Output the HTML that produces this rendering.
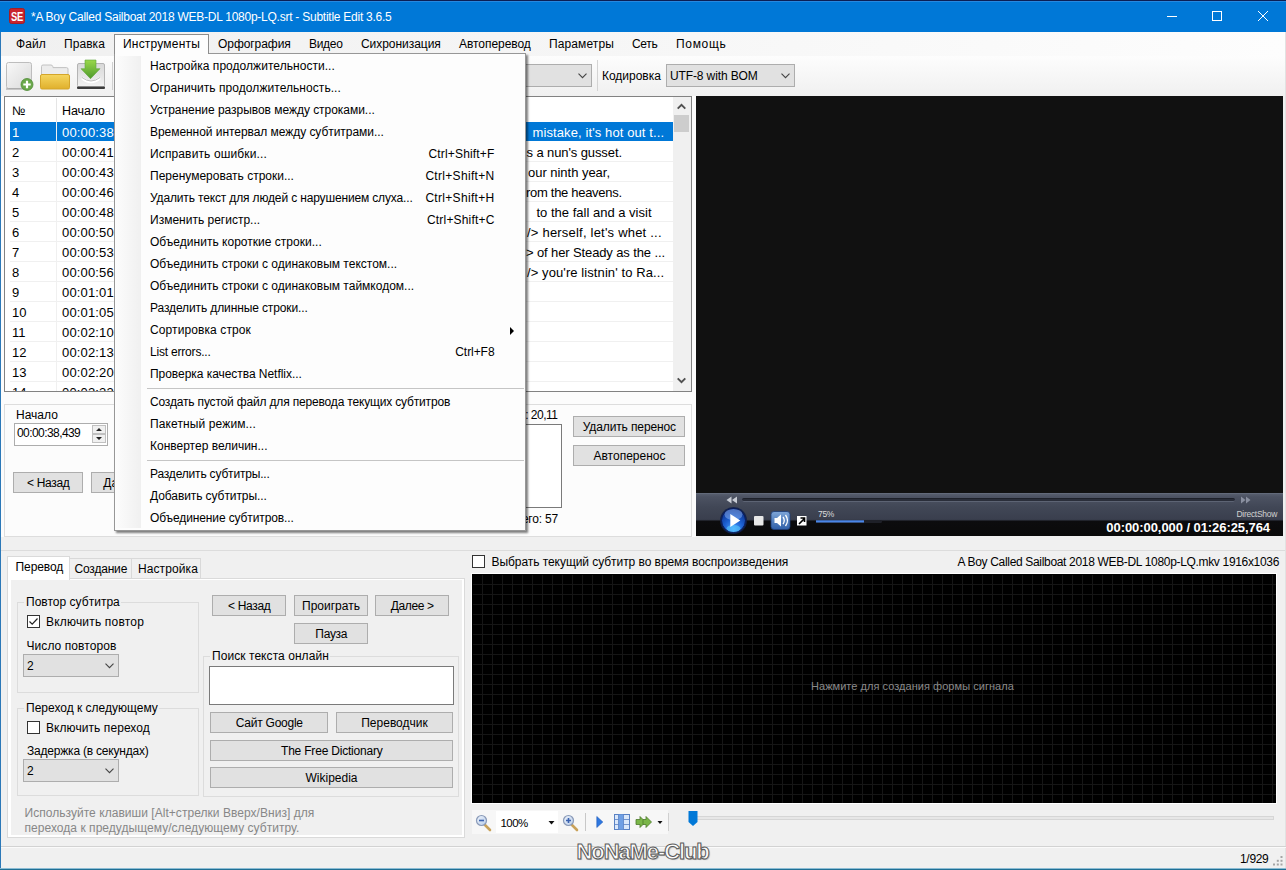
<!DOCTYPE html>
<html><head><meta charset="utf-8"><title>Subtitle Edit</title>
<style>
html,body{margin:0;padding:0;}
body{width:1286px;height:870px;overflow:hidden;position:relative;background:#f0f0f0;font-family:"Liberation Sans","DejaVu Sans",sans-serif;font-size:12px;color:#000;}
.a{position:absolute;white-space:nowrap;}
.t{position:absolute;white-space:nowrap;line-height:16px;height:16px;}
.row{position:absolute;left:5px;height:20px;width:663px;border-bottom:1px solid #f0f0f0;box-sizing:border-box;font-size:13px;line-height:21px;}
.row span{position:absolute;top:0;}
</style></head><body>
<div class="a" style="left:0px;top:0px;width:1286px;height:870px;background:#f0f0f0;"></div>
<div class="a" style="left:0px;top:0px;width:1286px;height:32px;background:#0078d7;"></div>
<div class="a" style="left:0px;top:0px;width:1286px;height:1px;background:#0b1f55;"></div>
<div class="a" style="left:0px;top:1px;width:1286px;height:1px;background:#2688e0;"></div>
<div class="a" style="left:0px;top:32px;width:1px;height:838px;background:#2b78b8;"></div>
<div class="a" style="left:1285px;top:32px;width:1px;height:838px;background:#e2e2e2;"></div>
<div class="a" style="left:0px;top:868px;width:1286px;height:1px;background:#8cbcd4;"></div>
<div class="a" style="left:0px;top:869px;width:1286px;height:1px;background:#1f6f94;"></div>
<div class="a" style="left:9px;top:8px;width:16px;height:16px;background:#c9242d;border:1px solid #a51d25;box-sizing:border-box;border-radius:2.500px;"></div>
<div class="t" style="left:7px;top:8.500px;width:20px;color:#fff;font-weight:bold;font-size:13px;letter-spacing:-0.5px;text-align:center;transform:scaleX(0.72);">SE</div>
<div class="t" style="top:9px;left:31px;color:#fff;letter-spacing:-0.250px;">*A Boy Called Sailboat 2018 WEB-DL 1080p-LQ.srt - Subtitle Edit 3.6.5</div>
<svg class="a" style="left:1150px;top:0" width="136" height="32" viewBox="0 0 136 32"><g stroke="#fff" stroke-width="1" fill="none"><path d="M17 16.5h10"/><rect x="62.5" y="11.5" width="9" height="9"/><path d="M108 11l10 10M118 11l-10 10"/></g></svg>
<div class="a" style="left:1px;top:32px;width:1284px;height:24px;background:linear-gradient(90deg,#f0f0f0,#fdfdfd);"></div>
<div class="a" style="left:1px;top:56px;width:1284px;height:40px;background:linear-gradient(#fdfdfd,#f0f0f0);"></div>
<div class="t" style="top:36px;left:16px;letter-spacing:0.099px;">Файл</div>
<div class="t" style="top:36px;left:64px;letter-spacing:0.053px;">Правка</div>
<div class="t" style="top:36px;left:218px;letter-spacing:-0.062px;">Орфография</div>
<div class="t" style="top:36px;left:309px;letter-spacing:-0.314px;">Видео</div>
<div class="t" style="top:36px;left:361px;letter-spacing:-0.045px;">Сихронизация</div>
<div class="t" style="top:36px;left:459px;letter-spacing:-0.052px;">Автоперевод</div>
<div class="t" style="top:36px;left:549px;letter-spacing:0.104px;">Параметры</div>
<div class="t" style="top:36px;left:632px;letter-spacing:-0.297px;">Сеть</div>
<div class="t" style="top:36px;left:676px;letter-spacing:0.690px;">Помощь</div>
<svg class="a" style="left:4px;top:58px" width="112" height="36" viewBox="0 0 112 36">
<defs>
<linearGradient id="gdoc" x1="0" y1="0" x2="1" y2="1"><stop offset="0" stop-color="#f8f8f8"/><stop offset="1" stop-color="#dadada"/></linearGradient>
<linearGradient id="gfol" x1="0" y1="0" x2="0" y2="1"><stop offset="0" stop-color="#f5d660"/><stop offset="1" stop-color="#e0b02c"/></linearGradient>
<linearGradient id="garr" x1="0" y1="0" x2="0" y2="1"><stop offset="0" stop-color="#9ad84a"/><stop offset="1" stop-color="#4e9a2c"/></linearGradient>
<linearGradient id="gtray" x1="0" y1="0" x2="0" y2="1"><stop offset="0" stop-color="#d8d8d8"/><stop offset="1" stop-color="#f2f2f2"/></linearGradient>
</defs>
<!-- new doc -->
<rect x="2.5" y="4.5" width="25" height="26" rx="2" fill="url(#gdoc)" stroke="#bdbdbd"/>
<path d="M2 31h22" stroke="#9a9a9a" stroke-width="1"/>
<circle cx="23" cy="26.5" r="6" fill="#6aa84a" stroke="#4e8a36" stroke-width="0.8"/>
<path d="M23 22.8v7.4M19.3 26.5h7.4" stroke="#fff" stroke-width="2.2"/>
<!-- folder -->
<path d="M37.5 13v-4.5q0-1.5 1.5-1.5h8q1.5 0 1.8 1.6l.2 1h13.5q1.5 0 1.5 1.5v6h-26.5z" fill="#ececec" stroke="#c2c2c2"/>
<rect x="36.5" y="16.5" width="29" height="14.5" rx="1.5" fill="url(#gfol)" stroke="#d4a52a"/>
<!-- save/download tray -->
<rect x="73.500" y="5.500" width="27" height="23.500" rx="1.500" fill="url(#gtray)" stroke="#b4b4b4"/>
<rect x="73" y="28.500" width="28" height="2.500" rx="1" fill="#3a3a3a"/>
<path d="M78 20q9 8 18 0" stroke="#fff" stroke-width="2.600" fill="none"/>
<path d="M78 19.500q9 7 18 0" stroke="#b0b0b0" stroke-width="0.800" fill="none"/>
<path d="M81 2h11v8.700h4l-9.500 10l-9.500-10h4z" fill="url(#garr)" stroke="#5ea43a" stroke-width="0.600"/>
<!-- separator -->
<path d="M108.500 4v28" stroke="#d0d0d0"/>
</svg>

<div class="a" style="left:479px;top:64px;width:113px;height:23px;background:#e1e1e1;border:1px solid #adadad;box-sizing:border-box;"><svg class="a" style="right:4px;top:8px" width="9" height="6" viewBox="0 0 9 6"><path d="M0.5 0.7L4.5 4.7L8.5 0.7" stroke="#444" stroke-width="1.1" fill="none"/></svg></div>
<div class="a" style="left:597px;top:60px;width:1px;height:31px;background:#d4d4d4;"></div>
<div class="t" style="top:68px;left:602px;letter-spacing:-0.027px;">Кодировка</div>
<div class="a" style="left:666px;top:64px;width:129px;height:23px;background:#e1e1e1;border:1px solid #adadad;box-sizing:border-box;"><svg class="a" style="right:4px;top:8px" width="9" height="6" viewBox="0 0 9 6"><path d="M0.5 0.7L4.5 4.7L8.5 0.7" stroke="#444" stroke-width="1.1" fill="none"/></svg></div>
<div class="t" style="top:67.5px;left:670px;letter-spacing:-0.118px;">UTF-8 with BOM</div>
<div class="a" style="left:1px;top:96px;width:695px;height:441px;background:#fcfcfc;"></div>
<div class="a" style="left:4px;top:96px;width:688px;height:296px;background:#fff;border:1px solid #828282;box-sizing:border-box;overflow:hidden;">
<div class="t" style="left:7px;top:6px;font-size:12.500px;">№</div><div class="t" style="left:57px;top:6px;font-size:12.500px;letter-spacing:-0.1px;">Начало</div>
<div class="a" style="left:51px;top:1px;width:1px;height:24px;background:#e5e5e5"></div>
<div class="row" style="top:25px;background:#0078d7;color:#fff;border-bottom:1px solid #fff;"><span style="left:2px">1</span><span style="left:52px;letter-spacing:0.15px">00:00:38</span><span style="left:522.5px;letter-spacing:0.103px">mistake, it's hot out t...</span></div>
<div class="row" style="top:45px;"><span style="left:2px">2</span><span style="left:52px;letter-spacing:0.15px">00:00:41</span><span style="left:516.5px;letter-spacing:-0.103px">s a nun's gusset.</span></div>
<div class="row" style="top:65px;"><span style="left:2px">3</span><span style="left:52px;letter-spacing:0.15px">00:00:43</span><span style="left:518px;letter-spacing:-0.028px">our ninth year,</span></div>
<div class="row" style="top:85px;"><span style="left:2px">4</span><span style="left:52px;letter-spacing:0.15px">00:00:46</span><span style="left:516px;letter-spacing:-0.296px">rom the heavens.</span></div>
<div class="row" style="top:105px;"><span style="left:2px">5</span><span style="left:52px;letter-spacing:0.15px">00:00:48</span><span style="left:526.5px;letter-spacing:0.005px">to the fall and a visit</span></div>
<div class="row" style="top:125px;"><span style="left:2px">6</span><span style="left:52px;letter-spacing:0.15px">00:00:50</span><span style="left:517px;letter-spacing:0.208px">/&gt; herself, let's whet ...</span></div>
<div class="row" style="top:145px;"><span style="left:2px">7</span><span style="left:52px;letter-spacing:0.15px">00:00:53</span><span style="left:516px;letter-spacing:-0.120px">&gt; of her Steady as the ...</span></div>
<div class="row" style="top:165px;"><span style="left:2px">8</span><span style="left:52px;letter-spacing:0.15px">00:00:56</span><span style="left:517px;letter-spacing:0.090px">/&gt; you're listnin' to Ra...</span></div>
<div class="row" style="top:185px;"><span style="left:2px">9</span><span style="left:52px;letter-spacing:0.15px">00:01:01</span></div>
<div class="row" style="top:205px;"><span style="left:2px">10</span><span style="left:52px;letter-spacing:0.15px">00:01:05</span></div>
<div class="row" style="top:225px;"><span style="left:2px">11</span><span style="left:52px;letter-spacing:0.15px">00:02:10</span></div>
<div class="row" style="top:245px;"><span style="left:2px">12</span><span style="left:52px;letter-spacing:0.15px">00:02:13</span></div>
<div class="row" style="top:265px;"><span style="left:2px">13</span><span style="left:52px;letter-spacing:0.15px">00:02:20</span></div>
<div class="row" style="top:285px;"><span style="left:2px">14</span><span style="left:52px;letter-spacing:0.15px">00:02:22</span></div>
<div class="a" style="left:51px;top:25px;width:1px;height:270px;background:#f0f0f0"></div>
<div class="a" style="left:668px;top:0;width:18px;height:294px;background:#f0f0f0"></div>
<div class="a" style="left:669px;top:18px;width:15px;height:17px;background:#cdcdcd"></div>
<svg class="a" style="left:672px;top:6px" width="9" height="7" viewBox="0 0 9 7"><path d="M0.7 5.6L4.5 1.8L8.3 5.6" stroke="#505050" stroke-width="1.9" fill="none"/></svg>
<svg class="a" style="left:672px;top:280px" width="9" height="7" viewBox="0 0 9 7"><path d="M0.7 1.4L4.5 5.2L8.3 1.4" stroke="#505050" stroke-width="1.9" fill="none"/></svg>
</div>
<div class="a" style="left:4px;top:404px;width:688px;height:133px;background:#fcfcfc;border:1px solid #dddddd;box-sizing:border-box;"></div>
<div class="t" style="top:407px;left:16px;">Начало</div>
<div class="a" style="left:14px;top:423px;width:94px;height:23px;background:#fff;border:1px solid #adadad;box-sizing:border-box;"></div>
<div class="t" style="top:425px;left:17px;letter-spacing:-0.570px;">00:00:38,439</div>
<div class="a" style="left:92px;top:425px;width:14px;height:9px;background:#f0f0f0;border:1px solid #c0c0c0;box-sizing:border-box"></div><div class="a" style="left:92px;top:434px;width:14px;height:9px;background:#f0f0f0;border:1px solid #c0c0c0;box-sizing:border-box"></div>
<svg class="a" style="left:96px;top:427px" width="6" height="14" viewBox="0 0 6 14"><path d="M0 4L3 1L6 4zM0 10L3 13L6 10z" fill="#222"/></svg>
<div class="a" style="left:13px;top:472px;width:70px;height:21px;background:#e1e1e1;border:1px solid #adadad;box-sizing:border-box;"></div>
<div class="t" style="top:474.5px;left:27px;letter-spacing:-0.321px;">&lt; Назад</div>
<div class="a" style="left:91px;top:472px;width:70px;height:21px;background:#e1e1e1;border:1px solid #adadad;box-sizing:border-box;"></div>
<div class="t" style="top:474.5px;left:103.253px;">Далее &gt;</div>
<div class="a" style="left:400px;top:424px;width:162px;height:84px;background:#fff;border:1px solid #7a7a7a;box-sizing:border-box;"></div>
<div class="t" style="top:407px;right:728.5px;letter-spacing:-0.501px;">: 20,11</div>
<div class="t" style="top:511px;right:728px;letter-spacing:-0.196px;">его: 57</div>
<div class="a" style="left:573px;top:416px;width:112px;height:21px;background:#e1e1e1;border:1px solid #adadad;box-sizing:border-box;"></div>
<div class="t" style="top:418.5px;left:582.75px;letter-spacing:-0.119px;">Удалить перенос</div>
<div class="a" style="left:573px;top:445px;width:112px;height:21px;background:#e1e1e1;border:1px solid #adadad;box-sizing:border-box;"></div>
<div class="t" style="top:447.5px;left:593.5px;">Автоперенос</div>
<div class="a" style="left:696px;top:96px;width:587px;height:397px;background:#111;"></div>
<div class="a" style="left:696px;top:493px;width:587px;height:43px;background:linear-gradient(#6e7686 0,#565d6d 1px,#4c5262 4px,#414756 14px,#3a3f4e 26px,#353a48 27px,#0c0c0e 28px,#0a0a0a 43px);"></div>
<div class="a" style="left:742px;top:498px;width:493px;height:4px;background:#2a2e3a;border-top:1px solid #1e212a;border-bottom:1px solid #5d6474;box-sizing:border-box;border-radius:2px;"></div>
<svg class="a" style="left:696px;top:493px" width="587" height="43" viewBox="0 0 587 43">
<defs>
<radialGradient id="gplay" cx="0.5" cy="0.85" r="0.8"><stop offset="0" stop-color="#4fa0ff"/><stop offset="0.5" stop-color="#1c5fd0"/><stop offset="1" stop-color="#0c2f8a"/></radialGradient>
<linearGradient id="gvol" x1="0" y1="0" x2="0" y2="1"><stop offset="0" stop-color="#7fa6d8"/><stop offset="1" stop-color="#2f5fa8"/></linearGradient>
</defs>
<path d="M30.500 7l5 -3.500v7zM36 7l5 -3.500v7z" fill="#c8ccd4"/>
<path d="M545 3.500l4.500 3.500l-4.500 3.500zM550 3.500l4.500 3.500l-4.500 3.500z" fill="#8a90a0"/>
<circle cx="37.500" cy="27.500" r="13.500" fill="#10204c" opacity="0.9"/>
<circle cx="37.500" cy="27.500" r="12" fill="url(#gplay)" stroke="#0a1c5a" stroke-width="1"/>
<ellipse cx="37.500" cy="21.500" rx="9" ry="5.500" fill="#9cc4ff" opacity="0.45"/><ellipse cx="37.500" cy="35.500" rx="7" ry="3.500" fill="#5ad0ff" opacity="0.55"/>
<path d="M34.300 21v13l10-6.500z" fill="#fff"/>
<rect x="58" y="23" width="9.500" height="9.500" rx="1" fill="#e8e8e8"/>
<rect x="75" y="18.500" width="19" height="18" rx="3" fill="url(#gvol)" stroke="#1c3c78" stroke-width="0.800"/>
<path d="M78.500 25h2.500l4-3.500v12l-4-3.500h-2.500z" fill="#fff"/>
<path d="M87 24q2.500 3.500 0 7M89.500 22q4 5.500 0 11" stroke="#fff" stroke-width="1.300" fill="none"/>
<rect x="101" y="23" width="9.500" height="9.500" fill="#fff"/>
<path d="M103 31l5-5M104.500 25h4v4" stroke="#000" stroke-width="1.600" fill="none"/>
<rect x="120" y="27" width="66" height="3" rx="1.500" fill="#1e2028"/>
<rect x="120" y="27.300" width="48" height="2.200" fill="#4a86e8"/>
</svg>
<div class="t" style="left:818px;top:506px;font-size:8.500px;color:#dcdcdc;letter-spacing:-0.3px;">75%</div>
<div class="t" style="right:9px;top:506px;font-size:8.500px;color:#d0d0d0;letter-spacing:-0.3px;">DirectShow</div>
<div class="t" style="right:16px;top:520px;font-size:13px;font-weight:bold;color:#fff;letter-spacing:-0.07px;">00:00:00,000 / 01:26:25,764</div>

<div class="a" style="left:1px;top:550px;width:1284px;height:1px;background:#dcdcdc;"></div>
<div class="a" style="left:7px;top:578px;width:458px;height:260px;background:#fff;border:1px solid #dadada;box-sizing:border-box;"></div>
<div class="a" style="left:11px;top:580px;width:451px;height:255px;background:#f0f0f0;"></div>
<div class="a" style="left:69px;top:558px;width:63px;height:21px;background:#f0f0f0;border:1px solid #d9d9d9;box-sizing:border-box;"></div>
<div class="a" style="left:131px;top:558px;width:70px;height:21px;background:#f0f0f0;border:1px solid #d9d9d9;box-sizing:border-box;"></div>
<div class="a" style="left:7px;top:556px;width:63px;height:24px;background:#fff;border:1px solid #dadada;border-bottom:none;box-sizing:border-box;"></div>
<div class="t" style="top:559px;left:15.5px;letter-spacing:-0.083px;">Перевод</div>
<div class="t" style="top:561px;left:74.5px;letter-spacing:-0.189px;">Создание</div>
<div class="t" style="top:561px;left:138px;letter-spacing:0.091px;">Настройка</div>
<div class="a" style="left:17px;top:602px;width:182px;height:91px;border:1px solid #dcdcdc;box-sizing:border-box;"></div>
<div class="a" style="left:24px;top:600px;width:97px;height:5px;background:#f0f0f0;"></div>
<div class="t" style="top:594px;left:26px;letter-spacing:0.021px;">Повтор субтитра</div>
<div class="a" style="left:27px;top:615px;width:13px;height:13px;background:#fff;border:1px solid #333;box-sizing:border-box;"><svg class="a" style="left:0;top:0" width="11" height="11" viewBox="0 0 11 11"><path d="M1.5 5.5L4.2 8.2L9.5 2.5" stroke="#222" stroke-width="1.2" fill="none"/></svg></div>
<div class="t" style="top:614px;left:46px;letter-spacing:0.189px;">Включить повтор</div>
<div class="t" style="top:638px;left:26.5px;letter-spacing:0.070px;">Число повторов</div>
<div class="a" style="left:23px;top:654px;width:96px;height:23px;background:#e1e1e1;border:1px solid #adadad;box-sizing:border-box;"><svg class="a" style="right:4px;top:8px" width="9" height="6" viewBox="0 0 9 6"><path d="M0.5 0.7L4.5 4.7L8.5 0.7" stroke="#444" stroke-width="1.1" fill="none"/></svg></div>
<div class="t" style="top:657.5px;left:27px;">2</div>
<div class="a" style="left:17px;top:708px;width:182px;height:88px;border:1px solid #dcdcdc;box-sizing:border-box;"></div>
<div class="a" style="left:24px;top:706px;width:135px;height:5px;background:#f0f0f0;"></div>
<div class="t" style="top:700px;left:26px;">Переход к следующему</div>
<div class="a" style="left:27px;top:721px;width:13px;height:13px;background:#fff;border:1px solid #333;box-sizing:border-box;"></div>
<div class="t" style="top:720px;left:46px;letter-spacing:0.073px;">Включить переход</div>
<div class="t" style="top:743px;left:27px;letter-spacing:-0.204px;">Задержка (в секундах)</div>
<div class="a" style="left:23px;top:759px;width:96px;height:23px;background:#e1e1e1;border:1px solid #adadad;box-sizing:border-box;"><svg class="a" style="right:4px;top:8px" width="9" height="6" viewBox="0 0 9 6"><path d="M0.5 0.7L4.5 4.7L8.5 0.7" stroke="#444" stroke-width="1.1" fill="none"/></svg></div>
<div class="t" style="top:762.5px;left:27px;">2</div>
<div class="t" style="top:804.5px;left:24.5px;color:#878787;letter-spacing:0.040px;">Используйте клавиши [Alt+стрелки Вверх/Вниз] для</div>
<div class="t" style="top:819.5px;left:24.5px;color:#878787;letter-spacing:0.043px;">перехода к предудыщему/следующему субтитру.</div>
<div class="a" style="left:212px;top:595px;width:74px;height:21px;background:#e1e1e1;border:1px solid #adadad;box-sizing:border-box;"></div>
<div class="t" style="top:597.5px;left:228px;letter-spacing:-0.321px;">&lt; Назад</div>
<div class="a" style="left:294px;top:595px;width:74px;height:21px;background:#e1e1e1;border:1px solid #adadad;box-sizing:border-box;"></div>
<div class="t" style="top:597.5px;left:302.057px;">Проиграть</div>
<div class="a" style="left:375px;top:595px;width:74px;height:21px;background:#e1e1e1;border:1px solid #adadad;box-sizing:border-box;"></div>
<div class="t" style="top:597.5px;left:390.75px;letter-spacing:-0.366px;">Далее &gt;</div>
<div class="a" style="left:294px;top:623px;width:74px;height:21px;background:#e1e1e1;border:1px solid #adadad;box-sizing:border-box;"></div>
<div class="t" style="top:625.5px;left:315.3px;letter-spacing:-0.285px;">Пауза</div>
<div class="a" style="left:203px;top:656px;width:256px;height:141px;border:1px solid #dcdcdc;box-sizing:border-box;"></div>
<div class="a" style="left:210px;top:654px;width:120px;height:5px;background:#f0f0f0;"></div>
<div class="t" style="top:648px;left:212px;letter-spacing:0.062px;">Поиск текста онлайн</div>
<div class="a" style="left:209px;top:666px;width:245px;height:39px;background:#fff;border:1px solid #7a7a7a;box-sizing:border-box;"></div>
<div class="a" style="left:210px;top:712px;width:118px;height:21px;background:#e1e1e1;border:1px solid #adadad;box-sizing:border-box;"></div>
<div class="t" style="top:714.5px;left:235.75px;letter-spacing:-0.241px;">Сайт Google</div>
<div class="a" style="left:336px;top:712px;width:117px;height:21px;background:#e1e1e1;border:1px solid #adadad;box-sizing:border-box;"></div>
<div class="t" style="top:714.5px;left:361.247px;">Переводчик</div>
<div class="a" style="left:210px;top:740px;width:243px;height:21px;background:#e1e1e1;border:1px solid #adadad;box-sizing:border-box;"></div>
<div class="t" style="top:742.5px;left:281px;letter-spacing:-0.198px;">The Free Dictionary</div>
<div class="a" style="left:210px;top:767px;width:243px;height:21px;background:#e1e1e1;border:1px solid #adadad;box-sizing:border-box;"></div>
<div class="t" style="top:769.5px;left:305.49px;">Wikipedia</div>
<div class="a" style="left:472px;top:555px;width:13px;height:13px;background:#fff;border:1px solid #333;box-sizing:border-box;"></div>
<div class="t" style="top:554px;left:491.5px;letter-spacing:-0.059px;">Выбрать текущий субтитр во время воспроизведения</div>
<div class="t" style="top:554px;right:7px;letter-spacing:-0.327px;">A Boy Called Sailboat 2018 WEB-DL 1080p-LQ.mkv 1916x1036</div>
<div class="a" style="left:471px;top:573px;width:806px;height:231px;background:#fff;"></div>
<div class="a" style="left:472px;top:574px;width:804px;height:229px;background-color:#000;background-image:linear-gradient(90deg,#161616 1px,transparent 1px),linear-gradient(#161616 1px,transparent 1px);background-size:10px 10px;"></div>
<div class="a" style="left:472px;top:574px;width:1px;height:229px;background:#000;"></div>
<div class="a" style="left:472px;top:574px;width:804px;height:1px;background:#000;"></div>
<div class="t" style="top:678px;left:811px;font-size:11px;color:#8a8a8a;letter-spacing:0.041px;">Нажмите для создания формы сигнала</div>
<div class="a" style="left:472px;top:810px;width:196px;height:24px;background:#f7f7f7;"></div>
<div class="a" style="left:496px;top:811px;width:62px;height:22px;background:#fff;"></div>
<div class="t" style="left:500.500px;top:814.500px;font-size:11.500px;letter-spacing:-0.55px;">100%</div>
<div class="a" style="left:691px;top:816px;width:583px;height:4px;background:#e7e7e7;border:1px solid #d6d6d6;box-sizing:border-box;"></div>
<svg class="a" style="left:472px;top:808px" width="230" height="28" viewBox="0 0 230 28">
<defs><linearGradient id="glens" x1="0" y1="0" x2="1" y2="1"><stop offset="0" stop-color="#eef4fc"/><stop offset="1" stop-color="#b8cce8"/></linearGradient></defs>
<!-- zoom out -->
<path d="M13 17l5 5" stroke="#c9a25a" stroke-width="2.600" stroke-linecap="round"/>
<circle cx="9.500" cy="12.500" r="5" fill="url(#glens)" stroke="#8a9ab8" stroke-width="1.200"/>
<path d="M7 12.500h5" stroke="#3a62b0" stroke-width="1.600"/>
<!-- dropdown arrow -->
<path d="M76.500 13h6l-3 3.500z" fill="#111"/>
<!-- zoom in -->
<path d="M100 17l5 5" stroke="#c9a25a" stroke-width="2.600" stroke-linecap="round"/>
<circle cx="96.500" cy="12.500" r="5" fill="url(#glens)" stroke="#8a9ab8" stroke-width="1.200"/>
<path d="M94 12.500h5M96.500 10v5" stroke="#3a62b0" stroke-width="1.600"/>
<path d="M113.500 5v18" stroke="#c8c8c8"/>
<!-- play -->
<path d="M124.800 8.500l6 5.500l-6 5.500z" fill="#2e78e0" stroke="#1c58b8" stroke-width="0.600"/>
<!-- columns -->
<rect x="142.500" y="6.500" width="15" height="15" fill="#dbe8fa" stroke="#5a82c4"/>
<rect x="146.500" y="6.500" width="5" height="15" fill="#6f9fe4"/>
<path d="M146.500 6.500v15M151.500 6.500v15M142.500 11.500h4M142.500 16.500h4M151.500 11.500h6M151.500 16.500h6" stroke="#5a82c4" stroke-width="0.800"/>
<!-- green arrows -->
<path d="M164 11.500h4v-3l5.500 5.500l-5.500 5.500v-3h-4z" fill="#7ab648" stroke="#4c7a2c" stroke-width="0.800"/>
<path d="M171 11.500h3v-3l5.500 5.500l-5.500 5.500v-3h-3z" fill="#7ab648" stroke="#4c7a2c" stroke-width="0.800"/>
<path d="M185.500 13h5l-2.500 3z" fill="#111"/>
<path d="M196.500 5v18" stroke="#d0d0d0"/>
<!-- slider -->
<path d="M216.500 3h9v11l-4.500 4l-4.500 -4z" fill="#0078d7"/>
</svg>


<div class="a" style="left:1px;top:846px;width:1285px;height:1px;background:#d2d2d2;"></div>
<div class="a" style="left:1px;top:847px;width:1285px;height:1px;background:#fafafa;"></div>
<svg class="a" style="left:1272px;top:855px" width="12" height="12" viewBox="0 0 12 12"><g fill="#a5a5a5"><rect x="8.500" y="1" width="2" height="2"/><rect x="4.800" y="4.800" width="2" height="2"/><rect x="8.500" y="4.800" width="2" height="2"/><rect x="1" y="8.500" width="2" height="2"/><rect x="4.800" y="8.500" width="2" height="2"/><rect x="8.500" y="8.500" width="2" height="2"/></g></svg>
<div class="t" style="top:850.5px;right:17.5px;letter-spacing:-0.308px;">1/929</div>
<div class="a" style="left:576.500px;top:839px;height:26px;line-height:26px;font-size:22px;font-weight:bold;color:#fdfdfd;-webkit-text-stroke:1px #5a5a5a;letter-spacing:-1.1px;text-shadow:1px 1px 1px rgba(0,0,0,.25);">NoNaMe-Club</div>

<div class="a" style="left:114px;top:53px;width:412px;height:478px;background:#fdfdfd;border:1px solid #979797;box-sizing:border-box;box-shadow:2px 2px 2px rgba(0,0,0,.5);"></div>
<div class="a" style="left:114px;top:34px;width:95px;height:20px;background:#fdfdfd;border:1px solid #8d8d8d;border-bottom:none;box-sizing:border-box;"></div>
<div class="a" style="left:115px;top:53px;width:93px;height:2px;background:#fdfdfd;"></div>
<div class="t" style="top:36px;left:123px;letter-spacing:0.197px;">Инструменты</div>
<div class="a" style="left:116px;top:56px;width:25px;height:472px;background:linear-gradient(90deg,#fcfcfc,#f0f0f0);"></div>
<div class="t" style="top:58px;left:150px;letter-spacing:0.044px;">Настройка продолжительности...</div>
<div class="t" style="top:80px;left:150px;letter-spacing:0.057px;">Ограничить продолжительность...</div>
<div class="t" style="top:102px;left:150px;letter-spacing:-0.036px;">Устранение разрывов между строками...</div>
<div class="t" style="top:124px;left:150px;letter-spacing:-0.051px;">Временной интервал между субтитрами...</div>
<div class="t" style="top:146px;left:150px;letter-spacing:0.130px;">Исправить ошибки...</div>
<div class="t" style="top:146px;right:791.5px;letter-spacing:0.162px;">Ctrl+Shift+F</div>
<div class="t" style="top:168px;left:150px;">Перенумеровать строки...</div>
<div class="t" style="top:168px;right:791.5px;letter-spacing:0.313px;">Ctrl+Shift+N</div>
<div class="t" style="top:190px;left:150px;letter-spacing:-0.148px;">Удалить текст для людей с нарушением слуха...</div>
<div class="t" style="top:190px;right:791.5px;letter-spacing:0.313px;">Ctrl+Shift+H</div>
<div class="t" style="top:212px;left:150px;">Изменить регистр...</div>
<div class="t" style="top:212px;right:791.5px;letter-spacing:0.177px;">Ctrl+Shift+C</div>
<div class="t" style="top:234px;left:150px;letter-spacing:0.020px;">Объединить короткие строки...</div>
<div class="t" style="top:256px;left:150px;">Объединить строки с одинаковым текстом...</div>
<div class="t" style="top:278px;left:150px;">Объединить строки с одинаковым таймкодом...</div>
<div class="t" style="top:300px;left:150px;letter-spacing:-0.117px;">Разделить длинные строки...</div>
<div class="t" style="top:322px;left:150px;letter-spacing:0.101px;">Сортировка строк</div>
<svg class="a" style="left:510px;top:326.5px" width="5" height="8"><path d="M0 0l4 4l-4 4z" fill="#000"/></svg>
<div class="t" style="top:344px;left:150px;letter-spacing:-0.196px;">List errors...</div>
<div class="t" style="top:344px;right:791.5px;letter-spacing:-0.062px;">Ctrl+F8</div>
<div class="t" style="top:366px;left:150px;letter-spacing:-0.045px;">Проверка качества Netflix...</div>
<div class="a" style="left:147px;top:388px;width:377px;height:1px;background:#c5c5c5;"></div>
<div class="t" style="top:394px;left:150px;letter-spacing:-0.172px;">Создать пустой файл для перевода текущих субтитров</div>
<div class="t" style="top:416px;left:150px;letter-spacing:0.116px;">Пакетный режим...</div>
<div class="t" style="top:438px;left:150px;">Конвертер величин...</div>
<div class="a" style="left:147px;top:460px;width:377px;height:1px;background:#c5c5c5;"></div>
<div class="t" style="top:466px;left:150px;letter-spacing:-0.183px;">Разделить субтитры...</div>
<div class="t" style="top:488px;left:150px;letter-spacing:-0.083px;">Добавить субтитры...</div>
<div class="t" style="top:510px;left:150px;letter-spacing:-0.117px;">Объединение субтитров...</div>
</body></html>
